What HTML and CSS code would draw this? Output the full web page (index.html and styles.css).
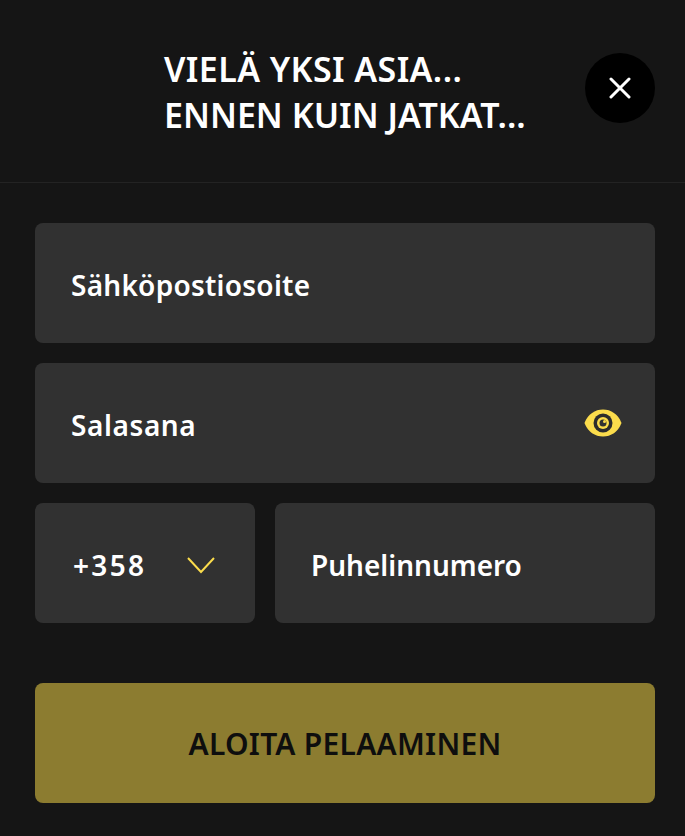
FILE: index.html
```html
<!DOCTYPE html>
<html lang="fi">
<head>
<meta charset="utf-8">
<title>Rekisteröityminen</title>
<link rel="stylesheet" href="styles.css">
</head>
<body>
<header class="header">
  <h1 class="title"><span class="title-first">VIELÄ YKSI ASIA...</span><br>ENNEN KUIN JATKAT...</h1>
  <button class="close" type="button" aria-label="Sulje">
    <svg width="22" height="22" viewBox="0 0 22 22"><path d="M2 2 20 20M20 2 2 20" fill="none" stroke="#fff" stroke-width="3" stroke-linecap="round"/></svg>
  </button>
</header>
<form class="form">
  <div class="field"><span class="label label-email">Sähköpostiosoite</span></div>
  <div class="field"><span class="label label-password">Salasana</span>
    <svg class="eye" width="38" height="28" viewBox="0 0 38 28">
      <path d="M.5 14C4 5 11 .5 19 .5S34 5 37.500 14C34 23 27 27.500 19 27.500S4 23 .5 14Z" fill="#fbdc4c"/>
      <circle cx="19" cy="14" r="9.500" fill="#2c2c2c"/>
      <circle cx="19" cy="14" r="6" fill="#fbdc4c"/>
      <circle cx="19" cy="14" r="3.500" fill="#313131"/>
      <circle cx="20.500" cy="12.500" r="1.500" fill="#fbdc4c"/>
    </svg>
  </div>
  <div class="row">
    <div class="field code"><span class="label label-code">+358</span>
      <svg class="chevron" width="30" height="18" viewBox="0 0 30 18"><path d="M2 2 15 16 28 2" fill="none" stroke="#fbdc4c" stroke-width="2"/></svg>
    </div>
    <div class="field phone"><span class="label">Puhelinnumero</span></div>
  </div>
  <button class="submit" type="button">ALOITA PELAAMINEN</button>
</form>
</body>
</html>
```
FILE: styles.css
```css
* { box-sizing: border-box; }
html, body { margin: 0; height: 100%; }
body {
  background: #151515;
  color: #fff;
  font-family: "Noto Sans", sans-serif;
  overflow: hidden;
}
.header {
  height: 183px;
  border-bottom: 1px solid #232323;
  display: flex;
  align-items: flex-start;
  padding: 46px 30px 0 164px;
  justify-content: space-between;
}
.title {
  margin: 0;
  font-size: 34px;
  line-height: 46px;
  font-weight: 600;
  white-space: nowrap;
}
.title-first { letter-spacing: 0.4px; }
.close {
  width: 70px;
  height: 70px;
  margin-top: 7px;
  border: 0;
  padding: 0;
  border-radius: 50%;
  background: #000;
  display: flex;
  align-items: center;
  justify-content: center;
}
.form {
  padding: 40px 30px 0 35px;
  display: flex;
  flex-direction: column;
  gap: 20px;
}
.field {
  height: 120px;
  border-radius: 8px;
  background: #313131;
  padding: 0 33px 0 36px;
  display: flex;
  align-items: center;
  justify-content: space-between;
}
.label {
  padding-top: 3px;
  font-size: 28px;
  font-weight: 600;
}
.label-email { letter-spacing: 0.25px; }
.label-password { letter-spacing: 0.6px; }
.label-code { letter-spacing: 2.3px; }
.chevron { margin-top: 4px; }
.row { display: flex; gap: 20px; }
.code { width: 220px; padding: 0 39px 0 38px; }
.phone { flex: 1; }
.submit {
  height: 120px;
  margin-top: 40px;
  border: 0;
  border-radius: 8px;
  background: #8c7c30;
  color: #0e0e0e;
  font: 600 30px "Noto Sans", sans-serif;
  letter-spacing: 0.25px;
}
```
